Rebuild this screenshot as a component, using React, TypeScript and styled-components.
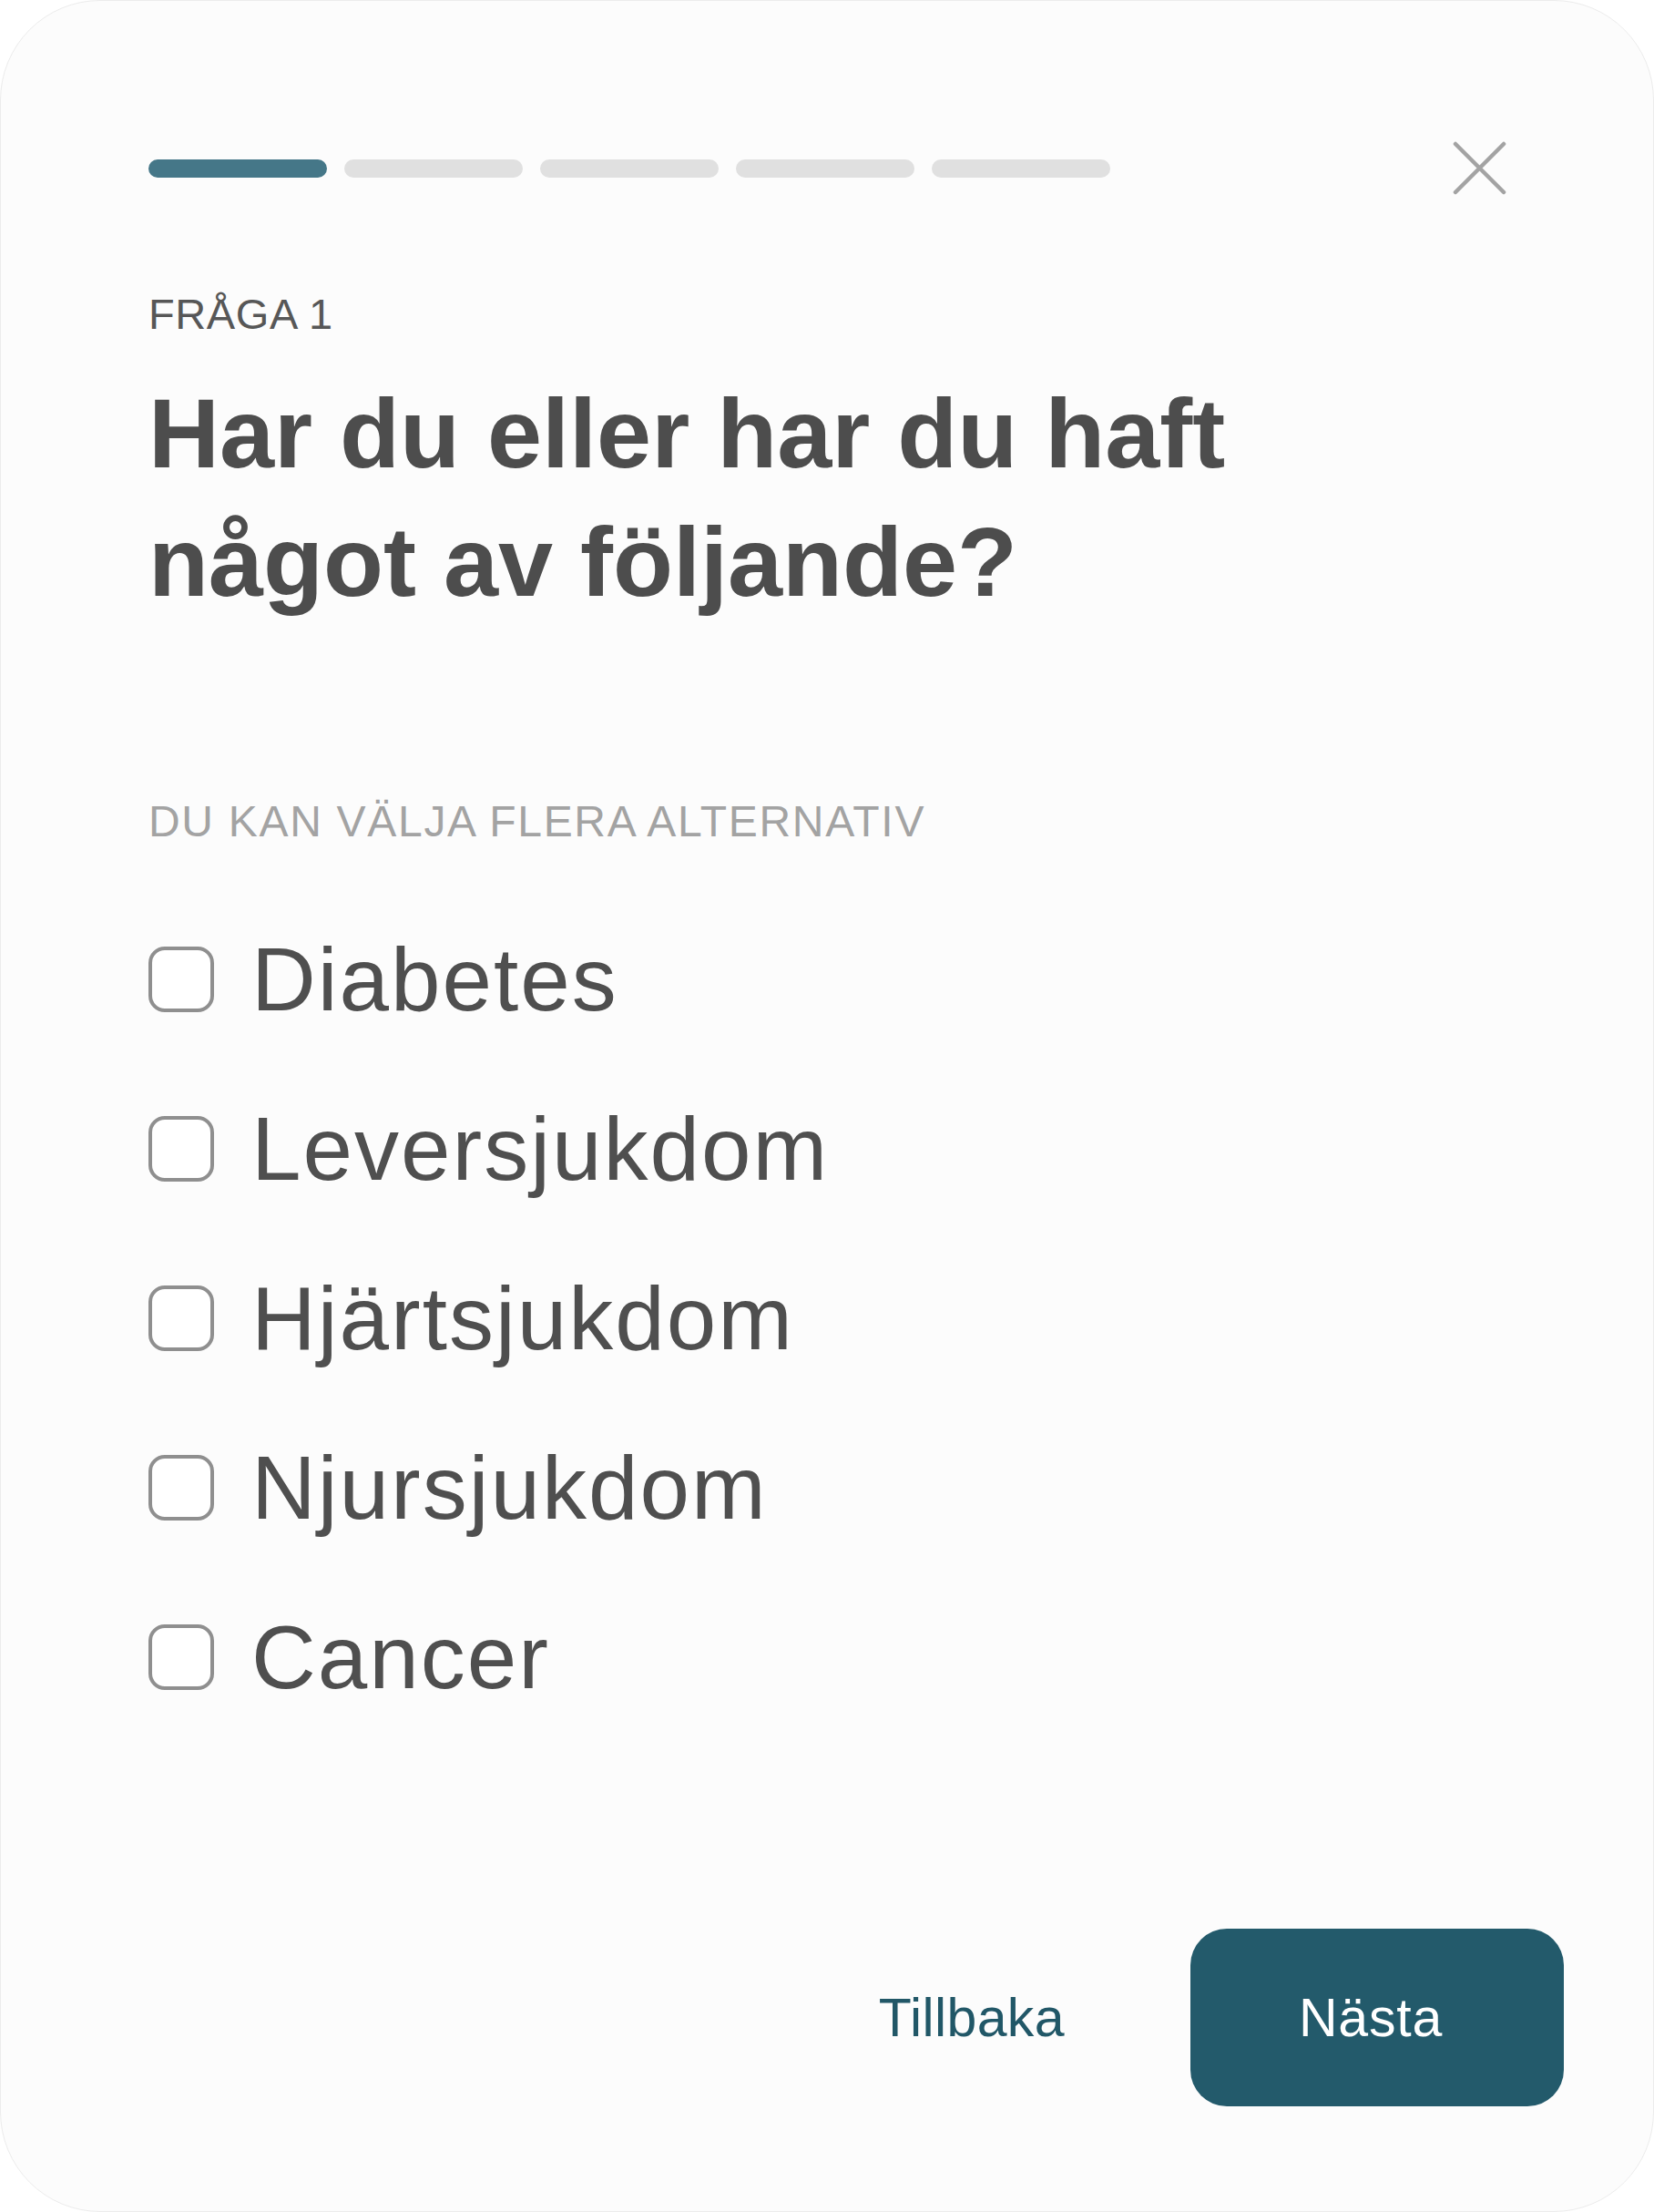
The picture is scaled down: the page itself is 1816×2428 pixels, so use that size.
import { useState } from "react";
import styled, { createGlobalStyle } from "styled-components";

const GlobalStyle = createGlobalStyle`
  * {
    box-sizing: border-box;
  }

  body {
    margin: 0;
    background: #ffffff;
    font-family: "Liberation Sans", Arial, sans-serif;
  }
`;

const Card = styled.div`
  width: 1816px;
  height: 2428px;
  display: flex;
  flex-direction: column;
  padding: 154px 98px 115px 162px;
  background: #fcfcfc;
  border: 1px solid #ececec;
  border-radius: 110px;
`;

const TopRow = styled.div`
  display: flex;
  align-items: center;
  height: 59px;
`;

const Progress = styled.div`
  display: flex;
  gap: 19px;
  width: 1056px;
`;

const Segment = styled.div<{ $active: boolean }>`
  flex: 1;
  height: 20px;
  border-radius: 10px;
  background: ${(p) => (p.$active ? "#457788" : "#e0e0e0")};
`;

const CloseButton = styled.button`
  margin-left: auto;
  margin-right: 63px;
  width: 59px;
  height: 59px;
  padding: 0;
  border: none;
  background: none;
  cursor: pointer;

  svg {
    display: block;
  }
`;

const QuestionNumber = styled.div`
  margin-top: 103px;
  font-size: 47px;
  line-height: 56px;
  letter-spacing: 0.6px;
  color: #575757;
`;

const Title = styled.h1`
  margin: 32px 0 0;
  font-size: 108px;
  line-height: 141px;
  font-weight: 700;
  color: #4d4d4d;
`;

const Hint = styled.div`
  margin-top: 187px;
  font-size: 48px;
  line-height: 56px;
  letter-spacing: 1.7px;
  text-transform: uppercase;
  color: #a3a3a3;
`;

const Options = styled.div`
  display: flex;
  flex-direction: column;
  gap: 76px;
  margin-top: 90px;
`;

const Option = styled.label`
  display: flex;
  align-items: center;
  gap: 41px;
  height: 110px;
  cursor: pointer;
`;

const Box = styled.span<{ $checked: boolean }>`
  flex: none;
  width: 72px;
  height: 72px;
  display: flex;
  align-items: center;
  justify-content: center;
  border: 4px solid ${(p) => (p.$checked ? "#235a6b" : "#8f8f8f")};
  border-radius: 18px;
  background: ${(p) => (p.$checked ? "#235a6b" : "#ffffff")};
`;

const HiddenInput = styled.input`
  position: absolute;
  opacity: 0;
  pointer-events: none;
`;

const OptionText = styled.span`
  font-size: 98px;
  line-height: 110px;
  letter-spacing: 2px;
  color: #4f4f4f;
`;

const Footer = styled.div`
  margin-top: auto;
  display: flex;
  justify-content: flex-end;
  align-items: center;
  gap: 138px;
`;

const BackButton = styled.button`
  padding: 0;
  border: none;
  background: none;
  font-family: inherit;
  font-size: 59px;
  letter-spacing: 0.4px;
  color: #215767;
  cursor: pointer;
`;

const NextButton = styled.button`
  width: 410px;
  height: 195px;
  padding: 0 14px 0 0;
  border: none;
  border-radius: 40px;
  background: #235a6b;
  font-family: inherit;
  font-size: 59px;
  letter-spacing: 0.8px;
  color: #ffffff;
  cursor: pointer;
`;

const options = ["Diabetes", "Leversjukdom", "Hjärtsjukdom", "Njursjukdom", "Cancer"];

export default function App() {
  const [selected, setSelected] = useState<string[]>([]);

  const toggle = (name: string) =>
    setSelected((s) => (s.includes(name) ? s.filter((x) => x !== name) : [...s, name]));

  return (
    <>
      <GlobalStyle />
      <Card>
        <TopRow>
          <Progress>
            {[0, 1, 2, 3, 4].map((i) => (
              <Segment key={i} $active={i === 0} />
            ))}
          </Progress>
          <CloseButton aria-label="Stäng">
            <svg width="59" height="59" viewBox="0 0 59 59">
              <path
                d="M3 3 L56 56 M56 3 L3 56"
                stroke="#a3a3a3"
                strokeWidth="4.5"
                strokeLinecap="round"
                fill="none"
              />
            </svg>
          </CloseButton>
        </TopRow>

        <QuestionNumber>FRÅGA 1</QuestionNumber>
        <Title>
          Har du eller har du haft
          <br />
          något av följande?
        </Title>

        <Hint>Du kan välja flera alternativ</Hint>

        <Options>
          {options.map((name) => {
            const checked = selected.includes(name);
            return (
              <Option key={name}>
                <HiddenInput type="checkbox" checked={checked} onChange={() => toggle(name)} />
                <Box $checked={checked}>
                  {checked && (
                    <svg width="44" height="44" viewBox="0 0 24 24">
                      <path
                        d="M5 12.5 L10 17 L19 7"
                        stroke="#fff"
                        strokeWidth="3"
                        fill="none"
                        strokeLinecap="round"
                        strokeLinejoin="round"
                      />
                    </svg>
                  )}
                </Box>
                <OptionText>{name}</OptionText>
              </Option>
            );
          })}
        </Options>

        <Footer>
          <BackButton>Tillbaka</BackButton>
          <NextButton>Nästa</NextButton>
        </Footer>
      </Card>
    </>
  );
}
